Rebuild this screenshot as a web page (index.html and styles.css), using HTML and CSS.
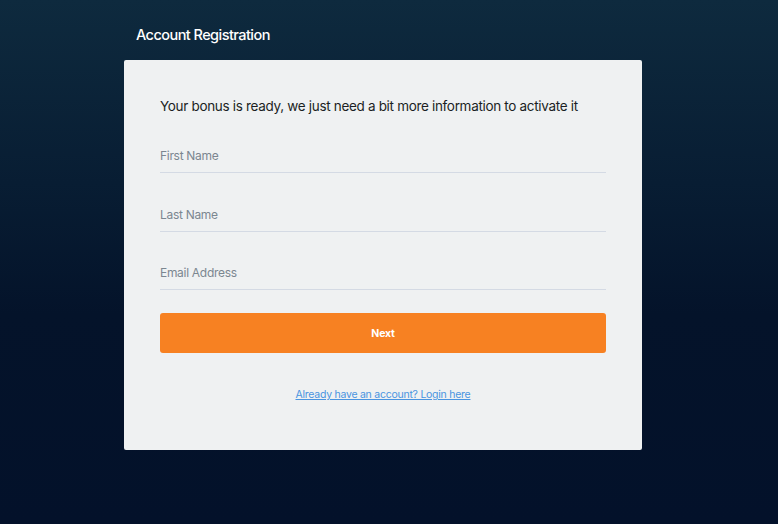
FILE: index.html
```html
<!DOCTYPE html>
<html lang="en">
<head>
<meta charset="utf-8">
<title>Account Registration</title>
<link rel="stylesheet" href="styles.css">
</head>
<body>
<main class="page">
  <h1 class="title">Account Registration</h1>
  <section class="card">
    <p class="lead">Your bonus is ready, we just need a bit more information to activate it</p>
    <form class="form">
      <input class="field" type="text" placeholder="First Name">
      <input class="field" type="text" placeholder="Last Name">
      <input class="field" type="email" placeholder="Email Address">
      <button class="btn" type="button">Next</button>
    </form>
    <p class="login"><a href="#">Already have an account? Login here</a></p>
  </section>
</main>
</body>
</html>
```
FILE: styles.css
```css
html, body {
  margin: 0;
  height: 100%;
}
body {
  background: linear-gradient(180deg, #0e2a3e 0%, #081d33 35%, #04132a 60%, #03112a 100%);
  font-family: Inter, "Noto Sans", sans-serif;
  min-height: 524px;
}
.page {
  width: 518px;
  margin-left: 124px;
  padding-top: 24px;
}
.title {
  margin: 0 0 0 12px;
  height: 22px;
  line-height: 22px;
  font-size: 14.5px;
  font-weight: 500;
  color: #ffffff;
  letter-spacing: -0.55px;
}
.card {
  margin-top: 14px;
  background: #eff1f2;
  border-radius: 2px;
  padding: 36px 36px 45px;
  height: 390px;
  box-sizing: border-box;
}
.lead {
  margin: 0;
  font-size: 13.5px;
  line-height: 20px;
  color: #1b1f24;
  letter-spacing: -0.32px;
}
.form {
  display: flex;
  flex-direction: column;
  margin-top: 29px;
}
.field {
  display: block;
  width: 100%;
  box-sizing: border-box;
  border: 0;
  border-bottom: 1px solid #d4dae4;
  background: transparent;
  padding: 0 0 7px;
  height: 28px;
  line-height: 20px;
  font-family: inherit;
  font-size: 12px;
  letter-spacing: -0.3px;
  color: #333;
  outline: none;
}
.field + .field {
  margin-top: 31px;
}
.field:last-of-type {
  margin-top: 30px;
}
.field::placeholder {
  color: #7b8690;
}
.btn {
  margin-top: 23px;
  height: 40px;
  width: 100%;
  border: 0;
  border-radius: 3px;
  background: #f78122;
  color: #ffffff;
  font-family: inherit;
  font-size: 10.5px;
  font-weight: 700;
  letter-spacing: -0.2px;
}
.login {
  margin: 32px 0 0;
  text-align: center;
  line-height: 20px;
  font-size: 10.5px;
  letter-spacing: -0.25px;
}
.login a {
  color: #4a94e0;
  text-decoration: underline;
}
```
